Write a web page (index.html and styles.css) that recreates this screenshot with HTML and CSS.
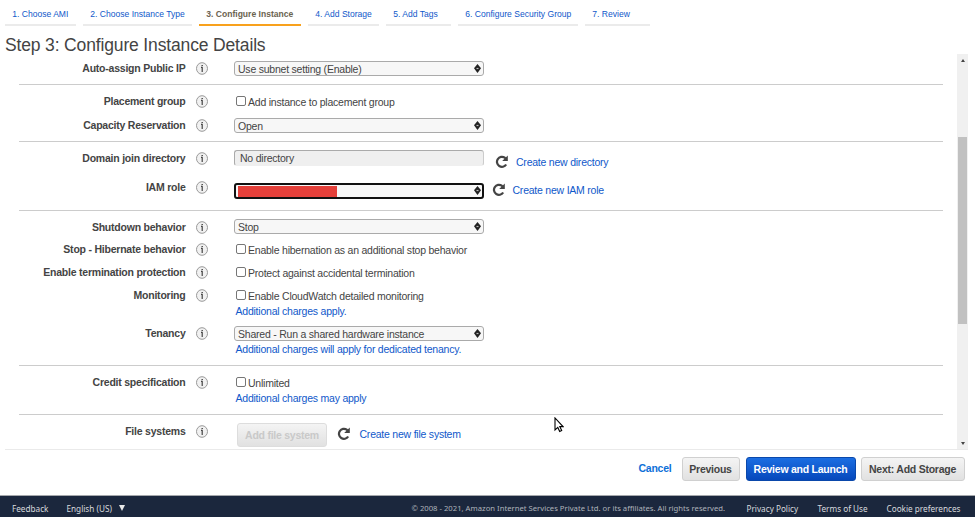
FILE: index.html
```html
<!DOCTYPE html>
<html lang="en">
<head>
<meta charset="utf-8">
<title>Configure Instance Details</title>
<link rel="stylesheet" href="styles.css">
</head>
<body>
<svg class="defs" width="0" height="0">
  <symbol id="info" viewBox="0 0 12 13"><ellipse cx="6" cy="6.5" rx="5.5" ry="5.8" fill="#f1f1f1" stroke="#999"/><path d="M6.2 5V10M5 5.4h1" fill="none" stroke="#444" stroke-width="1.2"/><rect x="5.5" y="3" width="1.4" height="1.2" fill="#444"/></symbol>
  <symbol id="refresh" viewBox="0 0 13 13"><path d="M11.2 9.5A5 5 0 1 1 9.8 2.7L10.8 4" fill="none" stroke="#444" stroke-width="2.2"/><path d="M12.8.5v5.4H7.2z" fill="#444"/></symbol>
  <symbol id="updown" viewBox="0 0 7 9"><path d="M3.5 0 7 4.3 3.5 9 0 4.3z" fill="#222"/><path d="M2.5 4.5h2" stroke="#bbb" stroke-width="1.2"/></symbol>
</svg>
<div class="page">
  <nav class="tabs">
    <a class="tab t1">1. Choose AMI</a>
    <a class="tab t2">2. Choose Instance Type</a>
    <a class="tab t3 active">3. Configure Instance</a>
    <a class="tab t4">4. Add Storage</a>
    <a class="tab t5">5. Add Tags</a>
    <a class="tab t6">6. Configure Security Group</a>
    <a class="tab t7">7. Review</a>
  </nav>
  <h1>Step 3: Configure Instance Details</h1>
  <main class="panel">
    <div class="form">
      <section class="first">
        <div class="row h24"><label>Auto-assign Public IP</label><svg class="info"><use href="#info"/></svg><div class="select">Use subnet setting (Enable)<svg><use href="#updown"/></svg></div></div>
      </section>
      <section>
        <div class="row h24"><label>Placement group</label><svg class="info"><use href="#info"/></svg><div class="check"><input type="checkbox"><span>Add instance to placement group</span></div></div>
        <div class="row h24"><label>Capacity Reservation</label><svg class="info"><use href="#info"/></svg><div class="select">Open<svg><use href="#updown"/></svg></div></div>
      </section>
      <section>
        <div class="row h29"><label>Domain join directory</label><svg class="info"><use href="#info"/></svg><div class="select disabled">No directory</div><div class="action directory"><svg><use href="#refresh"/></svg><a>Create new directory</a></div></div>
        <div class="row h31"><label>IAM role</label><svg class="info"><use href="#info"/></svg><div class="select focused"><span class="redacted"></span><svg><use href="#updown"/></svg></div><div class="action role"><svg><use href="#refresh"/></svg><a>Create new IAM role</a></div></div>
      </section>
      <section>
        <div class="row h22"><label>Shutdown behavior</label><svg class="info"><use href="#info"/></svg><div class="select stop">Stop<svg><use href="#updown"/></svg></div></div>
        <div class="row h23"><label>Stop - Hibernate behavior</label><svg class="info"><use href="#info"/></svg><div class="check"><input type="checkbox"><span>Enable hibernation as an additional stop behavior</span></div></div>
        <div class="row h23"><label>Enable termination protection</label><svg class="info"><use href="#info"/></svg><div class="check"><input type="checkbox"><span>Protect against accidental termination</span></div></div>
        <div class="row h38"><label>Monitoring</label><svg class="info"><use href="#info"/></svg><div><div class="check"><input type="checkbox"><span>Enable CloudWatch detailed monitoring</span></div><a class="note">Additional charges apply.</a></div></div>
        <div class="row h40"><label>Tenancy</label><svg class="info"><use href="#info"/></svg><div><div class="select">Shared - Run a shared hardware instance<svg><use href="#updown"/></svg></div><a class="note">Additional charges will apply for dedicated tenancy.</a></div></div>
      </section>
      <section>
        <div class="row h40"><label>Credit specification</label><svg class="info"><use href="#info"/></svg><div><div class="check"><input type="checkbox"><span>Unlimited</span></div><a class="note">Additional charges may apply</a></div></div>
      </section>
      <section class="last">
        <div class="row h26"><label>File systems</label><svg class="info"><use href="#info"/></svg><button class="btn add" disabled>Add file system</button><div class="action files"><svg><use href="#refresh"/></svg><a>Create new file system</a></div></div>
      </section>
    </div>
    <div class="scrollbar"><i class="up"></i><div class="thumb"></div><i class="down"></i></div>
  </main>
  <div class="buttons">
    <a class="cancel">Cancel</a>
    <button class="btn previous">Previous</button>
    <button class="btn primary">Review and Launch</button>
    <button class="btn next">Next: Add Storage</button>
  </div>
  <footer>
    <span class="feedback">Feedback</span><span class="language">English (US)</span><i class="caret"></i>
    <span class="copyright">© 2008 - 2021, Amazon Internet Services Private Ltd. or its affiliates. All rights reserved.</span>
    <span class="privacy">Privacy Policy</span><span class="terms">Terms of Use</span><span class="cookies">Cookie preferences</span>
  </footer>
  <svg class="cursor" viewBox="0 0 10 16"><path d="M1 1v12l2.8-2.6 1.9 4.1 2-1-1.9-3.9H9z" fill="#fff" stroke="#000" stroke-width="1.1"/></svg>
</div>
</body>
</html>
```

FILE: styles.css
```css
* { box-sizing: border-box; }
body { margin: 0; background: #fff; font: 10.5px/16px "Liberation Sans", Arial, sans-serif; letter-spacing: -.225px; color: #444; overflow: hidden; }
.defs { position: absolute; }
.page { width: 975px; height: 517px; position: relative; display: flex; flex-direction: column; }
a { color: #0f58ca; white-space: nowrap; }
.tabs { display: flex; gap: 7px; height: 26px; padding: 6px 0 0 5px; font-size: 8.55px; letter-spacing: 0; flex: none; }
.tab { height: 20px; padding-left: 7.3px; border-bottom: 2px solid #ebebeb; }
.tab.active { color: #6b6350; font-weight: bold; border-color: #f8a11d; }
.t1 { width: 71px; } .t2 { width: 109px; } .t3 { width: 102px; } .t4 { width: 71px; } .t5 { width: 65px; } .t6 { width: 120px; } .t7 { width: 65px; }
h1 { margin: 0; height: 28px; padding: 8px 0 0 5px; font-size: 17.5px; letter-spacing: -.15px; line-height: 22px; font-weight: normal; flex: none; }
.panel { display: flex; justify-content: space-between; height: 396px; width: 963px; margin-left: 5px; border-bottom: 1px solid #eaeaea; flex: none; }
.form { width: 924px; margin-left: 14px; }
section { padding-top: 8px; border-bottom: 1px solid #ccc; }
.first { padding-top: 6px; }
.last { border: 0; }
.row { display: flex; align-items: flex-start; }
.h22 { height: 22px; } .h23 { height: 23px; } .h24 { height: 24px; } .h26 { height: 26px; } .h29 { height: 29px; } .h31 { height: 31px; } .h38 { height: 38px; } .h40 { height: 40px; }
label { width: 166.5px; text-align: right; font-weight: bold; white-space: nowrap; flex: none; }
.info { width: 12px; height: 13px; margin: 2px 26px 0 10.5px; flex: none; }
.select { display: flex; align-items: center; justify-content: space-between; width: 250px; height: 15px; margin-top: 1px; padding: 0 2px 0 3px; background: #f7f7f7; border: 1px solid #aaa; border-radius: 3px; flex: none; }
.select.stop { margin-top: 0; }
.select svg { width: 7px; height: 9px; margin-top: -1px; }
.select.disabled { height: 16px; margin-top: 0; padding: 0 0 0 5px; background: #efefef; border-color: #aaa #ccc #efefef #aaa; }
.select.focused { height: 16px; margin-top: 4px; border: 2px solid #111; padding: 0 1px 0 2px; }
.redacted { width: 99px; height: 11px; background: #e5403a; margin-top: 1px; }
.check { display: flex; height: 16px; }
.check input { appearance: none; width: 10px; height: 10px; margin: 3px 2px 0 2px; border: 1px solid #767676; border-radius: 2px; background: #fff; }
.check span { line-height: 18px; }
.note { display: block; margin-left: 1.5px; }
.action { display: flex; align-items: center; height: 14px; }
.action svg { width: 13px; height: 13px; margin: -2px 8px 0 0; }
.directory { margin: 5px 0 0 11px; } .role { margin: 4px 0 0 7.5px; } .files { margin: 4px 0 0 10px; }
.files svg { margin-right: 9.5px; }
.btn { height: 24px; padding: 0; border: 1px solid #d0d0d0; border-radius: 3px; font: bold 10.5px/20px "Liberation Sans", Arial, sans-serif; letter-spacing: -.25px; color: #444; background: linear-gradient(#f4f4f4, #e1e1e1); white-space: nowrap; }
.add { width: 90px; margin-left: 3px; color: #c9c9c9; border-color: #ddd; }
.scrollbar { display: flex; flex-direction: column; align-items: center; width: 11px; background: #f0f0f0; }
.up, .down { width: 0; height: 0; border: 2.5px solid transparent; flex: none; }
.up { margin-top: 5px; border-top: 0; border-bottom: 3px solid #444; }
.thumb { width: 9px; height: 187px; margin-top: 75px; background: #c1c1c1; }
.down { margin-top: 118px; border-bottom: 0; border-top: 3px solid #444; }
.buttons { display: flex; justify-content: flex-end; align-items: flex-start; height: 45px; padding: 7px 10.5px 0 0; flex: none; }
.cancel { font-weight: bold; line-height: 23px; margin-right: 10px; color: #0e6fd8; }
.previous { width: 58px; margin-right: 6px; }
.primary { width: 110px; margin-right: 5px; color: #fff; border-color: #0a48ab; background: linear-gradient(#1b6ee2, #0648bb); }
.next { width: 104px; }
footer { display: flex; height: 22px; padding-left: 12px; border-top: 1px solid #a5a8ac; background: #1b273d; color: #d8dadd; font: 8.2px/25px "Noto Sans", sans-serif; letter-spacing: 0; white-space: nowrap; overflow: hidden; flex: none; }
.feedback { width: 54.5px; }
.feedback, .language, .copyright, .privacy, .terms, .cookies, .caret { flex: none; }
.language { width: 52px; }
.caret { width: 0; height: 0; border: 3.5px solid transparent; border-top: 6px solid #e8e8e8; border-bottom: 0; margin-top: 9px; }
.copyright { width: 335px; margin-left: 287px; color: #aeb3bb; font-size: 7.7px; }
.privacy { width: 71px; } .terms { width: 69px; }
.cursor { position: absolute; left: 554px; top: 417px; width: 10px; height: 16px; }
```
